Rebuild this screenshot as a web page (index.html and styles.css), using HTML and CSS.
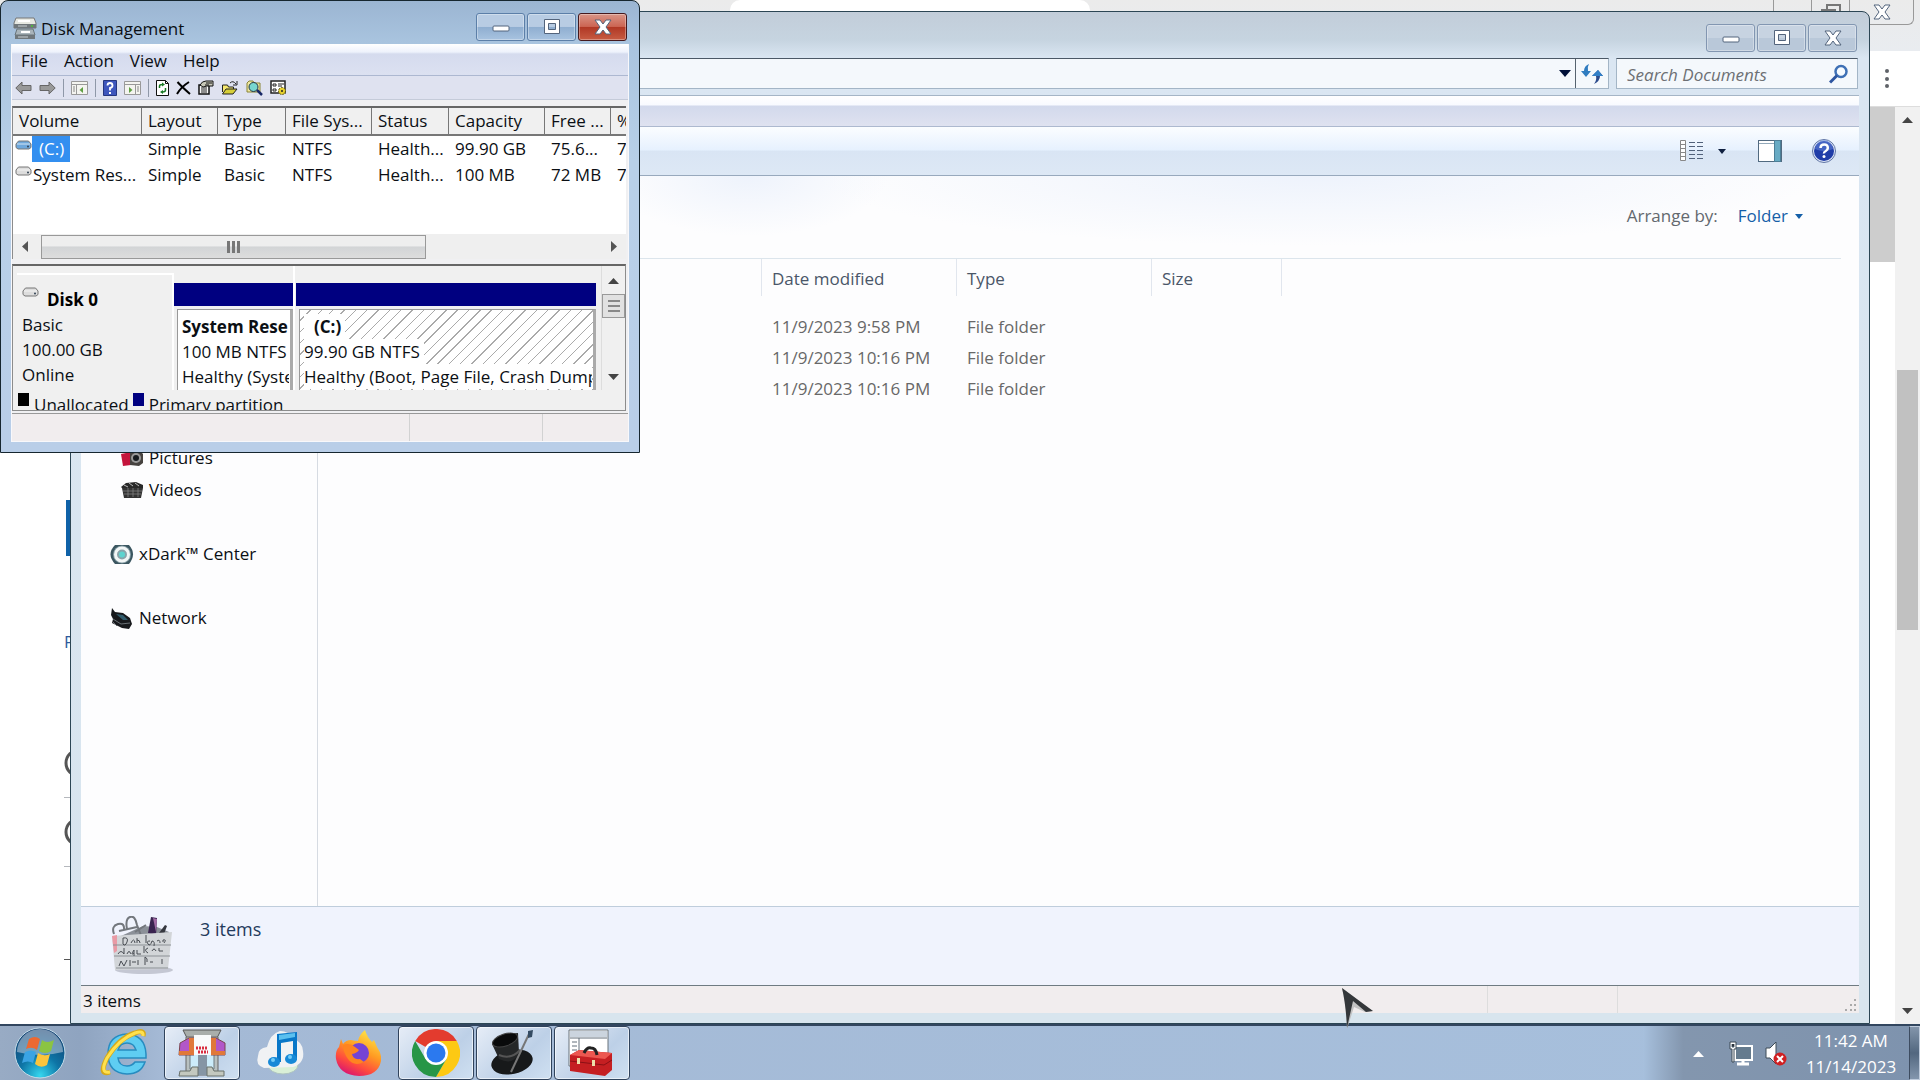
FILE: index.html
```html
<!DOCTYPE html>
<html lang="en">
<head>
<meta charset="utf-8">
<title>Disk Management</title>
<link rel="stylesheet" href="styles.css">
</head>
<body>
<svg class="defs" width="0" height="0" aria-hidden="true">
  <defs>
    <symbol id="min" viewBox="0 0 18 16"><rect x="1" y="7" width="16" height="5" rx="1" fill="#fff" stroke="#53647c"/></symbol>
    <symbol id="max" viewBox="0 0 18 16"><path d="M1.500 .5h15v14h-15zM5.500 4.500v6h7v-6z" fill="#fff" fill-rule="evenodd" stroke="#53647c"/></symbol>
    <symbol id="close" viewBox="0 0 18 16"><path d="M1 1h5l3 4 3-4h5l-5 7 5 7h-5l-3-4-3 4H1l5-7z" fill="#fff" stroke="#53647c" stroke-linejoin="round"/></symbol>
    <symbol id="drive" viewBox="0 0 17 10"><path d="M3.500 1h10l2.500 3v3.500L14 9H3L1 7.500V4z" fill="currentColor" stroke="#777"/><path d="M2 4h13" stroke="#fff" opacity=".7"/><circle cx="13" cy="6.500" r="1" fill="#345"/></symbol>
  </defs>
</svg>
<div class="screen">
  <main class="desktop">
    <section class="browser" aria-label="Browser">
      <header class="tabs">
        <div class="tab"></div>
        <div class="browser-buttons">
          <button aria-label="Minimize browser"></button>
          <button aria-label="Restore browser"><svg width="20" height="16" viewBox="0 0 20 16"><path d="M6 6V1h13v9h-4" fill="none" stroke="#777" stroke-width="2"/><rect x="1" y="6" width="13" height="9" fill="#fff" stroke="#777" stroke-width="2"/></svg></button>
          <button class="wide" aria-label="Close browser"><svg width="18" height="16"><use href="#close"/></svg></button>
        </div>
      </header>
      <div class="browser-bar"><button class="kebab" aria-label="Browser menu"><svg width="6" height="20"><circle cx="3" cy="2" r="2"/><circle cx="3" cy="10" r="2"/><circle cx="3" cy="17" r="2"/></svg></button></div>
      <div class="page">
        <div class="page-edge">
          <div class="blue-block"></div>
          <a class="page-link" href="#">P</a>
          <svg class="ring" width="30" height="30"><circle cx="15" cy="15" r="13"/></svg>
          <hr>
          <svg class="ring" width="30" height="30"><circle cx="15" cy="15" r="13"/></svg>
          <hr>
          <hr class="far">
        </div>
        <div class="page-shade"></div>
        <div class="page-scroll"><svg width="11" height="6"><path d="M0 6L5.500 0 11 6z"/></svg><div class="page-thumb"></div><svg width="11" height="6"><path d="M0 0l5.500 6L11 0z"/></svg></div>
      </div>
    </section>

    <section class="explorer" aria-label="Documents">
      <header class="ex-title">
        <button class="cap" aria-label="Minimize"><svg width="18" height="16"><use href="#min"/></svg></button>
        <button class="cap" aria-label="Maximize"><svg width="18" height="16"><use href="#max"/></svg></button>
        <button class="cap" aria-label="Close"><svg width="18" height="16"><use href="#close"/></svg></button>
      </header>
      <div class="address-row">
        <div class="address">
          <button class="drop" aria-label="Previous locations"><svg width="12" height="7"><path d="M0 0h12L6 7z" fill="#001038"/></svg></button>
          <button class="refresh" aria-label="Refresh"><svg width="22" height="20" viewBox="0 0 22 20"><path d="M8 0Q3 2 3 7H0l5 6 5-6H7Q6 3 8 0z" fill="#2f7cc0"/><path d="M13 20q6-3 6-8h3l-5-6-6 6h4q1 4-2 8z" fill="#2b4b8c"/><path d="M11 12l6-6 5 6z" fill="#3280c8"/></svg></button>
        </div>
        <div class="search"><input type="text" placeholder="Search Documents" aria-label="Search Documents"><svg width="20" height="20" viewBox="0 0 20 20"><circle cx="12" cy="7.500" r="5.500" fill="#f6fbff" stroke="#3e70b5" stroke-width="2.500"/><path d="M8 11.500l-7 7" stroke="#2d55a0" stroke-width="3"/></svg></div>
      </div>
      <div class="ex-client">
        <div class="ex-menu"></div>
        <div class="ex-tools">
          <button class="views" aria-label="Change view"><svg width="24" height="22" viewBox="0 0 24 22"><path d="M.5.500h5v20h-5zM.5 4.500h5M.5 8.500h5M.5 12.500h5M.5 16.500h5" fill="#fff" stroke="#888"/><path d="M9 2.500h15M9 6.500h15M9 10.500h15M9 14.500h15M9 18.500h15" stroke="#51617a" stroke-dasharray="6 2"/></svg></button>
          <button class="views-drop" aria-label="More view options"><svg width="8" height="5"><path d="M0 0h8L4 5z" fill="#102040"/></svg></button>
          <button class="preview" aria-label="Preview pane"><svg width="24" height="22" viewBox="0 0 24 22"><rect x=".5" y=".5" width="23" height="21" fill="#fff" stroke="#516a80"/><path d="M1 3.500h15" stroke="#93a9ba"/><rect x="16.500" y=".5" width="6" height="21" fill="#68abc4" stroke="#4c7f97"/></svg></button>
          <button class="help" aria-label="Help"><svg width="24" height="24" viewBox="0 0 24 24"><circle cx="12" cy="12" r="11.500" fill="#dde5f5" stroke="#6076a5"/><circle cx="12" cy="12" r="10" fill="#203da8"/><path d="M3 10a9 9 0 0 1 18 0q-9 4-18 0" fill="#6485d8" opacity=".55"/><path d="M8.500 9q0-3.500 3.700-3.500T15.800 9q0 2-2 3t-1.800 2.500" fill="none" stroke="#fff" stroke-width="2.500"/><circle cx="12" cy="17.500" r="1.500" fill="#fff"/></svg></button>
        </div>
        <div class="ex-body">
          <nav class="tree" aria-label="Locations">
            <a class="child" href="#"><svg width="22" height="18" viewBox="0 0 22 18"><path d="M0 5l10-2v13l-8 1z" fill="#c4143c"/><path d="M9 4l2-2h8l3 3v9l-4 3-9-1z" fill="#46423f"/><circle cx="15" cy="9" r="5" fill="#999"/><circle cx="15" cy="9" r="3" fill="#171b1f"/></svg>Pictures</a>
            <a class="child" href="#"><svg width="22" height="18" viewBox="0 0 22 18"><path d="M0 6L5 2l10-1 7 3v3H1z" fill="#282828"/><path d="M3 4l4 2M8 2l4 3M14 2l4 3" stroke="#bbb"/><path d="M1 7h21l-2 10H3z" fill="#333"/><path d="M2 10h19M3 13h17M7 7v9M12 7v9M17 7v9" stroke="#888" stroke-width=".7"/></svg>Videos</a>
            <a class="root" href="#"><svg width="24" height="21" viewBox="0 0 24 21"><path d="M5 1h14q8 9 0 19H5Q-4 10 5 1" fill="#3b5660"/><circle cx="12" cy="10.500" r="9" fill="#89a0a8"/><circle cx="12" cy="10.500" r="6.500" fill="#89a4ab" stroke="#f2f6f6" stroke-width="3"/><circle cx="12" cy="10.500" r="3" fill="#5ed3cf"/></svg>xDark™ Center</a>
            <a class="root" href="#"><svg width="24" height="21" viewBox="0 0 24 21"><path d="M2 0l3 4 8 1 7 5 2 6-3 5-7-1-6-3-4-2 1-4-2-4z" fill="#17191c"/><path d="M6 6l7 1 5 5-5 0z" fill="#315b6b"/><path d="M3 11l8 5 9-1M3 14l4 4" stroke="#686f74" fill="none"/></svg>Network</a>
          </nav>
          <div class="files">
            <div class="library"><span>Arrange by:</span><button>Folder <svg width="8" height="5"><path d="M0 0h8L4 5z" fill="#155fa8"/></svg></button></div>
            <table class="file-table">
              <colgroup><col class="c-name"><col class="c-date"><col class="c-type"><col class="c-size"><col></colgroup>
              <thead><tr><th></th><th>Date modified</th><th>Type</th><th>Size</th><th></th></tr></thead>
              <tbody>
                <tr><td></td><td>11/9/2023 9:58 PM</td><td>File folder</td><td></td><td></td></tr>
                <tr><td></td><td>11/9/2023 10:16 PM</td><td>File folder</td><td></td><td></td></tr>
                <tr><td></td><td>11/9/2023 10:16 PM</td><td>File folder</td><td></td><td></td></tr>
              </tbody>
            </table>
          </div>
        </div>
        <div class="details">
          <svg width="66" height="60" viewBox="0 0 66 60"><ellipse cx="34" cy="54" rx="29" ry="4" fill="#c4c7d3"/><path d="M11 20L33 10l14 1 12 5-2 9H8z" fill="#8b9098"/><path d="M4 18q-3-8 4-10t6 7M17 13Q15 3 20 1t7 8l5 13M9 15l18-4M25 16l11-7" fill="none" stroke="#73777d" stroke-width="2"/><path d="M38 17l3-16 6 1-1 17z" fill="#39234f"/><path d="M43 2l4 1-1 13" fill="#a26aa5"/><path d="M49 17l6-8 2 1-3 8z" fill="#35373f"/><path d="M2 20l60-4-4 37-53 1z" fill="#d2d5d8"/><path d="M2 20l5-1v16l-3 2z" fill="#e99aa5"/><path d="M3 29h58M4 40h56M6 52h52" stroke="#8b9095"/><path d="M13 28v-6q6-1 4 4t-4 2m8-1q3-6 4 0m2 0v-5m0 2q3 0 3 3m6 0v-8m4 6q-4 0-2 3t4-3q3 0 2 5m3-5q3-2 3 2m3-1v-2q4-1 1 3M8 38q3-5 6 0v-6m3 6q2-5 4 0m3-1q-4 3 0-3v6m3-6v4h4m3-8v7m4-5q-5 2 0 5m4-2q2-4 4 0m3-3v3h4M9 50l2-5 3 5 3-6m3 6v-6m2 2h4m2 3v-5m7 5v-8q3 1 2 5m3 0h3m9 2v-5" fill="none" stroke="#494d53"/></svg>
          <span>3 items</span>
        </div>
        <footer class="ex-status"><span class="grow">3 items</span><span class="s1"></span><span class="s2"><svg width="12" height="12"><path d="M9 0h2v2H9zM5 5h2v2H5zM9 5h2v2H9zM0 10h2v2H0zM5 10h2v2H5zM9 10h2v2H9z" fill="#aaa"/></svg></span></footer>
      </div>
    </section>

    <section class="diskmgmt" aria-label="Disk Management">
      <header class="dm-title">
        <svg width="24" height="24" viewBox="0 0 24 24"><path d="M3 2h18l2 5v5H1V7z" fill="#e6e8e2" stroke="#777"/><path d="M1 8h22v4H1zM2 19h20v4H2z" fill="#70777b"/><path d="M4 13h16l2 6H2z" fill="#a9b4ba" stroke="#69747a"/><path d="M5 5h12M8 16h9" stroke="#fff" stroke-width="2"/><path d="M5 10h9M5 21h10" stroke="#c8d0d4"/><path d="M18 10h2" stroke="#53b042" stroke-width="2"/></svg>
        <h1>Disk Management</h1>
        <button class="cap" aria-label="Minimize"><svg width="18" height="16"><use href="#min"/></svg></button>
        <button class="cap" aria-label="Maximize"><svg width="18" height="16"><use href="#max"/></svg></button>
        <button class="cap red" aria-label="Close"><svg width="18" height="16"><use href="#close"/></svg></button>
      </header>
      <div class="dm-client">
        <nav class="dm-menu"><button>File</button><button>Action</button><button>View</button><button>Help</button></nav>
        <div class="dm-tools">
          <button aria-label="Back"><svg width="17" height="14" viewBox="0 0 17 14"><path d="M.8 7L7 1v3.500h9v5H7V13z" fill="#999" stroke="#666"/></svg></button>
          <button aria-label="Forward"><svg width="17" height="14" viewBox="0 0 17 14"><path d="M16.200 7L10 1v3.500H1v5h9V13z" fill="#999" stroke="#666"/></svg></button>
          <i></i>
          <button aria-label="Show console tree"><svg width="17" height="14" viewBox="0 0 17 14"><path d="M.5.500h16v13H.5zM1 3.500h15M5.500 4v9" fill="#f4f4f0" stroke="#999"/><path d="M2 6h2M2 8h2M2 10h2" stroke="#888"/><path d="M12 6v6L8.500 9z" fill="#5fa043"/></svg></button>
          <i></i>
          <button aria-label="Help topics"><svg width="14" height="16" viewBox="0 0 14 16"><path d="M.5.500h13v15H.5z" fill="#3e56bd" stroke="#26367f"/><path d="M4.500 5.500Q4.500 3 7 3t2.500 2.500Q9.500 7.500 7 8v2.500" fill="none" stroke="#fff" stroke-width="1.800"/><path d="M6 12h2v2H6z" fill="#fff"/></svg></button>
          <button aria-label="Show action pane"><svg width="17" height="14" viewBox="0 0 17 14"><path d="M.5.500h16v13H.5zM1 3.500h15M11.500 4v9" fill="#f4f4f0" stroke="#999"/><path d="M13 6h2M13 8h2M13 10h2" stroke="#888"/><path d="M5 6v6l3.500-3z" fill="#5fa043"/></svg></button>
          <i></i>
          <button aria-label="Refresh disks"><svg width="13" height="16" viewBox="0 0 13 16"><path d="M.5.500h9l3 3v12H.5z" fill="#fff" stroke="#111"/><path d="M9.500.500v3h3" fill="none" stroke="#111"/><path d="M3.500 8V6q0-1.500 3-1.500M9.500 8v2q0 2-3 2" fill="none" stroke="#197a24" stroke-width="1.500"/><path d="M6 2.500v4l3-2zM7 10v4l-3-2z" fill="#197a24"/></svg></button>
          <button aria-label="Delete"><svg width="15" height="14" viewBox="0 0 15 14"><path d="M1.500 1Q6 6 14 13M13 1Q5 6 1 13" fill="none" stroke="#000" stroke-width="2"/></svg></button>
          <button aria-label="Properties"><svg width="17" height="15" viewBox="0 0 17 15"><path d="M1 5h10v9H1z" fill="#f8f8f8" stroke="#111" stroke-width="1.500"/><path d="M3 8h6M3 10h6M3 12h6" stroke="#222"/><path d="M2 5q2-4 6-4h7v5H9L5 7z" fill="#c8c8b8" stroke="#111"/><path d="M8 3h6M7 5h4" stroke="#111"/></svg></button>
          <button aria-label="Open"><svg width="17" height="15" viewBox="0 0 17 15"><path d="M.5 12V5h5l1 2h5v2" fill="#f5e76e" stroke="#222"/><path d="M.5 14L4 9h11l-4 5z" fill="#d7cf38" stroke="#222"/><path d="M8 3q3-3 6 1M15 1v4h-4" fill="none" stroke="#222"/></svg></button>
          <button aria-label="Find"><svg width="17" height="16" viewBox="0 0 17 16"><path d="M1 3l2-2h4l1 2h6v9H1z" fill="#efe8a0" stroke="#8a8435"/><circle cx="7.500" cy="7" r="4.500" fill="#78d6cf" stroke="#234"/><path d="M11 10l5 5" stroke="#192968" stroke-width="2.500"/></svg></button>
          <button aria-label="Settings"><svg width="17" height="16" viewBox="0 0 17 16"><path d="M1 1h14v12H1z" fill="#fff" stroke="#222" stroke-width="1.500"/><path d="M3 4h3v2H3zM3 9h3v2H3z" fill="#fff" stroke="#222"/><path d="M8 4h6M8 6h4" stroke="#222"/><circle cx="12" cy="11" r="3.500" fill="#e7d12f" stroke="#544d12" stroke-dasharray="2 1"/><circle cx="12" cy="11" r="1" fill="#222"/></svg></button>
        </div>
        <div class="panel">
          <div class="volume-list">
            <table class="volumes">
              <colgroup><col class="v1"><col class="v2"><col class="v3"><col class="v4"><col class="v5"><col class="v6"><col class="v7"><col class="v8"></colgroup>
              <thead><tr><th>Volume</th><th>Layout</th><th>Type</th><th>File Sys...</th><th>Status</th><th>Capacity</th><th>Free ...</th><th>%</th></tr></thead>
              <tbody>
                <tr><td class="vol blue"><svg width="17" height="10"><use href="#drive"/></svg><span class="sel">(C:)</span></td><td>Simple</td><td>Basic</td><td>NTFS</td><td>Health...</td><td>99.90 GB</td><td>75.6...</td><td>7</td></tr>
                <tr><td class="vol"><svg width="17" height="10"><use href="#drive"/></svg><span>System Res...</span></td><td>Simple</td><td>Basic</td><td>NTFS</td><td>Health...</td><td>100 MB</td><td>72 MB</td><td>7</td></tr>
              </tbody>
            </table>
          </div>
          <div class="hscroll"><svg width="6" height="11"><path d="M6 0v11L0 5.500z"/></svg><div class="track"><div class="hthumb"><b></b><b></b><b></b></div></div><svg width="6" height="11"><path d="M0 0v11l6-5.500z"/></svg></div>
        </div>
        <div class="graph">
          <div class="graph-row">
            <div class="disk-info">
              <h2><svg width="17" height="10"><use href="#drive"/></svg>Disk 0</h2>
              <p>Basic</p><p>100.00 GB</p><p>Online</p>
            </div>
            <div class="part small"><div class="bar"></div><div class="part-box"><p><strong>System Rese</strong></p><p><span>100 MB NTFS</span></p><p><span>Healthy (Syste</span></p></div></div>
            <div class="part big"><div class="bar"></div><div class="part-box hatch"><p><strong class="in">(C:)</strong></p><p><span>99.90 GB NTFS</span></p><p><span>Healthy (Boot, Page File, Crash Dump</span></p></div></div>
            <div class="vscroll"><svg width="11" height="6"><path d="M0 6L5.500 0 11 6z"/></svg><div class="vthumb"><b></b><b></b><b></b></div><svg class="down" width="11" height="6"><path d="M0 0l5.500 6L11 0z"/></svg></div>
          </div>
          <div class="legend"><i class="un"></i><span>Unallocated</span><i class="pr"></i><span>Primary partition</span></div>
        </div>
        <footer class="dm-status"><span class="grow"></span><span class="d1"></span><span class="d2"></span></footer>
      </div>
    </section>
  </main>

  <footer class="taskbar">
    <button class="orb" aria-label="Start"><svg width="52" height="52" viewBox="0 0 52 52"><defs><radialGradient id="og" cx=".5" cy=".95" r=".9"><stop offset="0" stop-color="#35d7ef"/><stop offset=".45" stop-color="#0e75a6"/><stop offset="1" stop-color="#123f70"/></radialGradient></defs><circle cx="26" cy="26" r="25" fill="url(#og)" stroke="#c4dce9"/><path d="M3 25A23 23 0 0 1 49 25Q26 31 3 25" fill="#c2d2e0" opacity=".55"/><path d="M15 12q6-4 11 0l-3 11q-5-4-11-1z" fill="#ec6932"/><path d="M28 13q5 4 12 0l-3 11q-6 4-12 0z" fill="#8bc442"/><path d="M11 25q6-3 11 0l-3 11q-5-3-11 0z" fill="#3aa4e4"/><path d="M24 26q6 4 12 1l-3 11q-6 4-12-1z" fill="#fbc43b"/></svg></button>
    <button class="task" aria-label="Internet Explorer"><svg width="48" height="48" viewBox="0 0 48 48"><path d="M46 29H18q1 8 9 8 5 0 8-4h10q-4 12-18 12Q8 44 8 25T27 5q18 1 19 20zM36 21q-2-7-9-7t-9 7z" fill="#5fcdf2" stroke="#278cc0" stroke-width="1.500" fill-rule="evenodd"/><path d="M43 7q2-7-8-3Q19 9 7 29-2 47 10 43" fill="none" stroke="#d6a91a" stroke-width="5"/><path d="M43 7q1-6-8-3Q19 10 7 29-1 45 10 43" fill="none" stroke="#ffe14e" stroke-width="3"/></svg></button>
    <button class="task on" aria-label="Store"><svg width="48" height="48" viewBox="0 0 48 48"><path d="M5 1h38l-4 8H9z" fill="#a9aeab" stroke="#555"/><path d="M8 8h32v38H8z" fill="#b8c0c0" stroke="#666"/><path d="M12 25h9v15h-9zM27 25h9v15h-9z" fill="#ccecfa" stroke="#6f7b80"/><path d="M20 26h9v20h-9z" fill="#8595a4"/><path d="M2 14l9-5h5v17H1zM33 9h5l9 5v12H33z" fill="#b257c8" stroke="#7c4550"/><path d="M11 9h5v17h-5zM33 9h5v17h-5zM1 22h10v4H1zM38 22h9v4h-9z" fill="#e0783a"/><path d="M16 6h17v20H16z" fill="#f8fafb"/><path d="M18 19h12M20 23h10" stroke="#d92e40" stroke-width="3" stroke-dasharray="2 1"/><path d="M2 42h10l2-4h6v9H1zM29 38h5l2 4h10v5H29z" fill="#c3c8bf" stroke="#69706a"/></svg></button>
    <button class="task" aria-label="iTunes"><svg width="50" height="46" viewBox="0 0 50 46"><ellipse cx="28" cy="35" rx="15" ry="9" fill="#d9f0d7" stroke="#afc5c0"/><path d="M9 38Q0 35 3 26q0-8 9-9Q15 4 25 1q9 0 13 8 9 2 10 12 2 12-10 16z" fill="#f0f2f4"/><path d="M22 4l20-2v28h-4V11l-12 2v19h-4z" fill="#0877c8"/><path d="M24 5l16-2v4l-16 3z" fill="#5bc0ef"/><ellipse cx="19" cy="32" rx="6" ry="5" fill="#1689d7"/><ellipse cx="36" cy="29" rx="6" ry="5" fill="#1689d7"/><circle cx="18" cy="30" r="2" fill="#72ccf7"/><circle cx="35" cy="27" r="2" fill="#72ccf7"/></svg></button>
    <button class="task" aria-label="Firefox"><svg width="46" height="48" viewBox="0 0 46 48"><defs><linearGradient id="fx" x1=".8" y1="0" x2=".3" y2="1"><stop stop-color="#ffed4a"/><stop offset=".45" stop-color="#ff9a22"/><stop offset=".75" stop-color="#ff4b3e"/><stop offset="1" stop-color="#d91472"/></linearGradient></defs><path d="M6 10l2 5q3-4 8-4 4 1 7 1 1-6 7-11 2 7 7 12l2-2 3 7q5 7 4 14-3 15-22 15Q4 46 1 30q-1-8 3-12z" fill="url(#fx)"/><circle cx="24" cy="24" r="10" fill="#7543d5"/><path d="M8 16q7-3 12 2l4 3q-2 3-7 4 1 6 8 5l4 3q-10 5-16-3-5-7-5-14" fill="#ff8420"/></svg></button>
    <button class="task on" aria-label="Chrome"><svg width="48" height="48" viewBox="0 0 48 48"><path d="M24 24L3.200 12A24 24 0 0 1 44.800 12z" fill="#e33b2e"/><path d="M24 24L24 12H44.800A24 24 0 0 1 24 48L34.400 30z" fill="#fdc913"/><path d="M24 24L34.400 30 24 48A24 24 0 0 1 3.200 12L13.600 30z" fill="#279647"/><circle cx="24" cy="24" r="12" fill="#fff"/><circle cx="24" cy="24" r="9.500" fill="#2b79ef"/></svg></button>
    <button class="task on" aria-label="Magic hat"><svg width="46" height="46" viewBox="0 0 46 46"><ellipse cx="21" cy="32" rx="21" ry="12" fill="#17191a" transform="rotate(-12 21 32)"/><path d="M1 14Q2 5 27 3l1 20Q22 36 8 29z" fill="#252728"/><ellipse cx="14" cy="10" rx="13" ry="6" transform="rotate(-18 14 10)" fill="#090a0b" stroke="#444"/><path d="M8 25q12 5 21-5" stroke="#555" fill="none" stroke-width="2"/><path d="M38 4L20 42" stroke="#777" stroke-width="2"/><path d="M37 1l5-1-1 7-4 1z" fill="#344b62"/></svg></button>
    <button class="task on" aria-label="Toolbox"><svg width="48" height="48" viewBox="0 0 48 48"><path d="M1 1h39v36H1z" fill="#fff" stroke="#69727b"/><path d="M2 2h37v6H2z" fill="#cbd4de"/><path d="M2 9h37M11 9v20M4 13h5M4 17h5M4 21h5" stroke="#626e7a"/><path d="M2 26l9-5 33 3v17l-7 6-35-5z" fill="#c51f22"/><path d="M2 26l9-5 33 3-7 6z" fill="#ec5750"/><path d="M2 32l34 4 8-5" fill="none" stroke="#8b1015"/><path d="M9 29h3v6H9zM24 31h3v6h-3z" fill="#eee0aa"/><path d="M16 24q3-6 7-5 5 0 6 7" fill="none" stroke="#222" stroke-width="3"/></svg></button>
    <div class="tray">
      <button aria-label="Show hidden icons"><svg width="11" height="7"><path d="M0 7l5.500-6L11 7z" fill="#fff"/></svg></button>
      <svg class="net" width="24" height="25" viewBox="0 0 24 25"><path d="M6 5h17v14H6z" fill="#657b8e" stroke="#fff" stroke-width="2"/><path d="M14 19v4M8 23h12" stroke="#fff" stroke-width="3"/><path d="M1 1h6v7H5v13H3V8H1z" fill="#fff" stroke="#3b4854"/><path d="M3 3v3h2V3" stroke="#567"/></svg>
      <svg class="snd" width="22" height="25" viewBox="0 0 22 25"><path d="M1 7h4l6-6v22l-6-6H1z" fill="#fff" stroke="#3d4b57"/><circle cx="15" cy="18" r="6.500" fill="#cf2022"/><path d="M12 15l6 6M18 15l-6 6" stroke="#fff" stroke-width="2"/></svg>
      <time><span>11:42 AM</span><span>11/14/2023</span></time>
      <button class="peek" aria-label="Show desktop"></button>
    </div>
  </footer>
  <svg class="cursor" width="32" height="41" viewBox="0 0 32 41"><path d="M0 0l31 23-8 1-11-5-7 22Q4 17 0 0z" fill="#bbb" opacity=".85"/><path d="M0 0l31 23-7 1L11 13 5 40Q4 17 0 0z" fill="#34373a"/></svg>
</div>
</body>
</html>
```
FILE: styles.css
```css
* { box-sizing: border-box; }
body { margin: 0; font: 17px/26px "Open Sans", "Noto Sans", sans-serif; color: #0b0f14; }
button { border: 0; padding: 0; margin: 0; background: none; font: inherit; color: inherit; display: flex; align-items: center; justify-content: center; }
svg { display: block; flex: none; }
a { color: inherit; text-decoration: none; }
h1, h2, p { margin: 0; font-size: 17px; font-weight: 400; }
table { border-collapse: separate; border-spacing: 0; table-layout: fixed; }
th { font-weight: 400; text-align: left; }
th, td { padding: 0; white-space: nowrap; }
.defs { position: absolute; }
.screen { position: relative; display: flex; flex-direction: column; height: 100vh; overflow: hidden; }
.desktop { position: relative; flex: 1; min-height: 0; }
.grow { flex: 1; }

/* Browser at the back */
.browser { display: flex; flex-direction: column; height: 100%; background: #fff; }
.tabs { display: flex; justify-content: space-between; height: 51px; padding: 0 6px 0 730px; background: linear-gradient(#ebebeb, #e9ecf0); }
.tab { width: 360px; height: 20px; background: #fff; border-radius: 10px 10px 0 0; }
.browser-buttons { display: flex; height: 25px; border: 1px solid #999; border-top: 0; border-radius: 0 0 6px 6px; }
.browser-buttons button { width: 38px; border-right: 1px solid #999; }
.browser-buttons .wide { width: 63px; border: 0; }
.browser-bar { display: flex; justify-content: flex-end; height: 56px; padding-right: 30px; border-bottom: 1px solid #ddd; }
.kebab { fill: #5f6368; }
.page { display: flex; flex: 1; min-height: 0; }
.page-edge { flex: 1; padding-left: 64px; }
.blue-block { width: 60px; height: 56px; margin: 393px 0 74px 2px; background: #0f62a8; }
.page-link { display: block; line-height: 24px; margin-bottom: 94px; color: #2f5b9c; }
.ring { fill: none; stroke: #555; stroke-width: 3; }
.page-edge hr { margin: 19px 0; border: 0; border-top: 1px solid #b5b8bd; }
.page-edge .far { margin-top: 92px; border-color: #555; }
.page-shade { width: 40px; height: 155px; background: #cdcdcd; }
.page-scroll { display: flex; flex-direction: column; align-items: center; width: 25px; padding: 10px 0; background: #f1f1f1; fill: #444; }
.page-thumb { width: 21px; height: 260px; margin: 247px 0 auto; background: #c1c1c1; }

/* Window caption buttons */
.cap { width: 49px; height: 28px; border: 1px solid #8296b1; border-radius: 3px; background: linear-gradient(#c7d3e1 50%, #b9c8d9 50%); box-shadow: inset 0 0 0 1px #ffffff55; }
.diskmgmt .cap { background: linear-gradient(#b8cce3 48%, #8faed0 50%, #a8c3e0); border-color: #5c7fa8; }
.diskmgmt .red { background: linear-gradient(#d99587, #cc6553 48%, #b03724 50%, #c75c43); border-color: #45191d; }

/* Explorer window */
.explorer { position: absolute; left: 70px; top: 11px; right: 50px; bottom: 0; display: flex; flex-direction: column; padding: 0 10px 10px; border: 1px solid #2c4654; border-radius: 8px 8px 0 0; background: linear-gradient(#c2cdd9, #c6d4e0 28px, #dae6f2 46px, #d8e5ee); }
.ex-title { display: flex; justify-content: flex-end; gap: 2px; height: 46px; padding: 12px 2px 0; }
.address-row { display: flex; gap: 7px; height: 31px; margin: 0 1px 6px 0; }
.address, .search { border: 1px solid #a3b5c6; border-top-color: #4b5866; background: #f4f8fc; }
.address { display: flex; flex: 1; justify-content: flex-end; }
.drop { width: 20px; }
.refresh { width: 33px; border-left: 1px solid #56636f; }
.search { display: flex; align-items: center; width: 242px; padding: 0 8px 0 10px; }
.search input { flex: 1; min-width: 0; padding: 2px 0 0; border: 0; outline: 0; background: none; font: italic 17px/26px "Open Sans", sans-serif; }
.search input::placeholder { color: #6d7074; opacity: 1; }
.ex-client { display: flex; flex: 1; flex-direction: column; min-height: 0; border-top: 1px solid #a5b5c6; background: #fdfdfe; }
.ex-menu { height: 31px; border-bottom: 1px solid #adb9cf; background: linear-gradient(#fff, #f8faff 9px, #d2d9ec 10px, #dfe2f0); }
.ex-tools { display: flex; align-items: center; justify-content: flex-end; height: 49px; padding-right: 23px; border-bottom: 1px solid #98a9bd; background: linear-gradient(#fbfdff, #e6f1fe 48%, #d9e5f4 50%, #dde8f5); }
.views-drop { margin: 0 32px 0 14px; }
.preview { margin-right: 30px; }
.ex-body { display: flex; flex: 1; min-height: 0; }
.tree { width: 237px; padding-top: 266px; border-right: 1px solid #d6dbe2; overflow: hidden; }
.tree a { display: flex; align-items: center; height: 32px; }
.tree .child { padding-left: 40px; gap: 6px; }
.tree .root { margin-top: 32px; padding-left: 29px; gap: 5px; }
.files { flex: 1; min-width: 0; background: #fdfdfe; }
.library { display: flex; justify-content: flex-end; align-items: flex-start; gap: 20px; height: 83px; margin-right: 18px; padding: 27px 38px 0 0; border-bottom: 1px solid #dce5ec; color: #63686e; background: radial-gradient(ellipse 140px 60px at 430px 0, #eef3fc, transparent), radial-gradient(ellipse 500px 70px at 1000px 0, #eef3fc, transparent); }
.library button { color: #155fa8; gap: 7px; }
.file-table { width: 100%; color: #686868; }
.c-name { width: 444px; }
.c-date, .c-type { width: 195px; }
.c-size { width: 130px; }
.file-table th { height: 37px; padding: 3px 0 0 10px; border-right: 1px solid #e1e6ee; color: #4a5668; }
.file-table th:last-child { border: 0; }
.file-table td { height: 31px; padding-left: 10px; }
.file-table tbody::before { content: ""; display: block; height: 15px; }
.details { display: flex; gap: 24px; height: 79px; padding: 9px 0 0 29px; border-top: 1px solid #bfcddc; background: #f0f3fd; font-size: 18px; color: #233a5c; }
.ex-status { display: flex; height: 28px; border-top: 1px solid #6f7b82; background: #f1edee; line-height: 29px; padding-left: 2px; }
.s1 { width: 130px; border-left: 1px solid #ddd; }
.s2 { display: flex; width: 242px; justify-content: flex-end; align-items: flex-end; padding: 2px; border-left: 1px solid #ddd; }

/* Disk Management window */
.diskmgmt { position: absolute; left: 0; top: 0; width: 640px; padding: 0 10px 10px; border: 1px solid #16262f; border-radius: 8px 8px 0 0; background: linear-gradient(#9bb5d2, #a9c4df 42px, #b8d0e8 160px, #b9cee8); }
.dm-title { display: flex; gap: 2px; height: 43px; padding: 12px 2px 0; }
.dm-title > svg { margin-top: 3px; }
.dm-title h1 { flex: 1; padding: 3px 0 0 2px; }
.dm-client { border: 1px solid #f8f8fb; border-top: 0; background: #f0f0f2; }
.dm-menu { display: flex; gap: 16px; height: 32px; padding: 3px 9px 1px; border-bottom: 1px solid #adb8d1; background: linear-gradient(#fff, #eef2fc 8px, #d5dbee 10px, #dce1f1); }
.dm-tools { display: flex; align-items: center; gap: 7px; height: 24px; padding-left: 3px; border-bottom: 1px solid #c5cbd9; background: #dfe2f0; }
.dm-tools i { width: 1px; height: 18px; background: #8f98a8; }
.panel, .graph { margin-right: 2px; border: 1px solid #8c8c8c; border-top: 2px solid #666; }
.panel { margin-top: 6px; border-right: 0; border-bottom: 0; background: #fff; }
.volume-list { height: 126px; overflow: hidden; }
.volumes { width: 615px; }
.v1 { width: 129px; } .v2 { width: 76px; } .v3 { width: 68px; } .v4 { width: 86px; } .v5 { width: 77px; } .v6 { width: 96px; } .v7 { width: 66px; } .v8 { width: 17px; }
.volumes th { height: 28px; padding: 0 0 0 6px; border-right: 1px solid #777; border-bottom: 2px solid #777; background: #f0f0f0; }
.volumes th:last-child { border-right: 0; }
.volumes td { height: 26px; padding-left: 6px; overflow: hidden; }
.volumes .vol { display: flex; align-items: flex-start; padding-left: 2px; gap: 1px; color: #ddd; }
.vol svg { margin-top: 4px; }
.vol.blue { color: #6ea8dc; }
.vol span { color: #0b0f14; }
.vol .sel { padding: 0 6px 0 7px; margin-left: -1px; background: #338ff0; color: #fff; }
.hscroll { display: flex; align-items: center; height: 25px; padding: 0 9px; background: #efefef; fill: #555; }
.track { flex: 1; margin: 0 12px 0 13px; }
.hthumb { display: flex; gap: 2px; align-items: center; justify-content: center; width: 69%; height: 24px; border: 1px solid #999; background: linear-gradient(#eee 45%, #d2d4d6 50%, #ddd); }
.hthumb b { width: 3px; height: 12px; background: #777; }
.graph { margin-top: 5px; background: #f0f0f0; }
.graph-row { display: flex; height: 124px; overflow: hidden; }
.disk-info { flex: none; width: 157px; margin: 7px 0 0 4px; padding: 12px 0 0 5px; border-top: 2px solid #fff; border-right: 2px solid #fff; line-height: 25px; }
.disk-info h2 { display: flex; gap: 8px; font-weight: 700; color: #000; }
.disk-info h2 svg { color: #ddd; }
.part { display: flex; flex-direction: column; flex: none; padding-top: 17px; border-right: 2px solid #fff; }
.part.small { width: 121px; }
.part.big { flex: 1; min-width: 0; margin-left: 1px; border: 0; padding-right: 5px; }
.bar { flex: none; height: 23px; background: #000080; }
.part-box { flex: none; height: 100px; margin: 3px 0 0 3px; padding: 4px 1px 0 4px; border: 1px solid #999; border-right: 3px solid #aaa; background: #fff; line-height: 25px; }
.part-box p { overflow: hidden; white-space: nowrap; }
.part-box p > * { display: inline-block; background: #fff; padding-right: 4px; }
.part-box .in { padding-left: 10px; }
.hatch { background: repeating-linear-gradient(135deg, #fff 0 7px, #aaa 7px 8px); }
.vscroll { display: flex; flex: none; flex-direction: column; align-items: center; width: 24px; padding: 12px 0 10px; fill: #444; border-left: 1px solid #ddd; }
.vthumb { display: flex; flex-direction: column; gap: 3px; align-items: center; justify-content: center; width: 23px; height: 24px; margin-top: 10px; border: 1px solid #999; background: #e1e1e1; }
.vthumb b { width: 12px; height: 2px; background: #888; }
.down { margin-top: auto; }
.legend { display: flex; height: 20px; padding-left: 5px; overflow: hidden; }
.legend i { width: 11px; height: 13px; margin: 3px 5px 0 0; }
.legend span { padding-top: 2px; margin-right: 4px; }
.un { background: #000; }
.pr { background: #000080; }
.dm-status { display: flex; height: 28px; margin-top: 2px; border-top: 1px solid #999; background: #f1edee; }
.d1 { width: 133px; border-left: 1px solid #d2d2d2; }
.d2 { width: 86px; border-left: 1px solid #d2d2d2; }

/* Taskbar */
.taskbar { display: flex; align-items: center; height: 56px; padding-left: 13px; border-top: 2px solid #32465f; background: linear-gradient(90deg, #98abc4, #8fa4c0 80px, #a4b9d5 160px, #a7c0dd); }
.orb { width: 54px; margin-right: 19px; }
.task { width: 76px; height: 54px; margin-right: 2px; border: 1px solid transparent; border-radius: 4px; }
.task.on { border-color: #30435c; background: linear-gradient(135deg, #e6edf7, #bdd0e7 60%, #cfe0f1); box-shadow: inset 0 0 0 1px #ffffff99; }
.tray { display: flex; align-items: center; align-self: stretch; margin-left: auto; padding-left: 50px; background: linear-gradient(90deg, #a7c0dd, #8396ae 40px, #7e93ae); color: #fff; }
.net { margin-left: 25px; }
.snd { margin: 0 16px 0 12px; }
.tray time { width: 96px; display: flex; flex-direction: column; align-items: center; padding-top: 2px; }
.peek { align-self: stretch; width: 11px; margin-left: 10px; border: 1px solid #becbdc; border-left-color: #3d4c60; background: linear-gradient(#8395ab, #52677f 50%, #8396ad); }
.cursor { position: absolute; left: 70%; top: 988px; margin-left: -2px; }
```
